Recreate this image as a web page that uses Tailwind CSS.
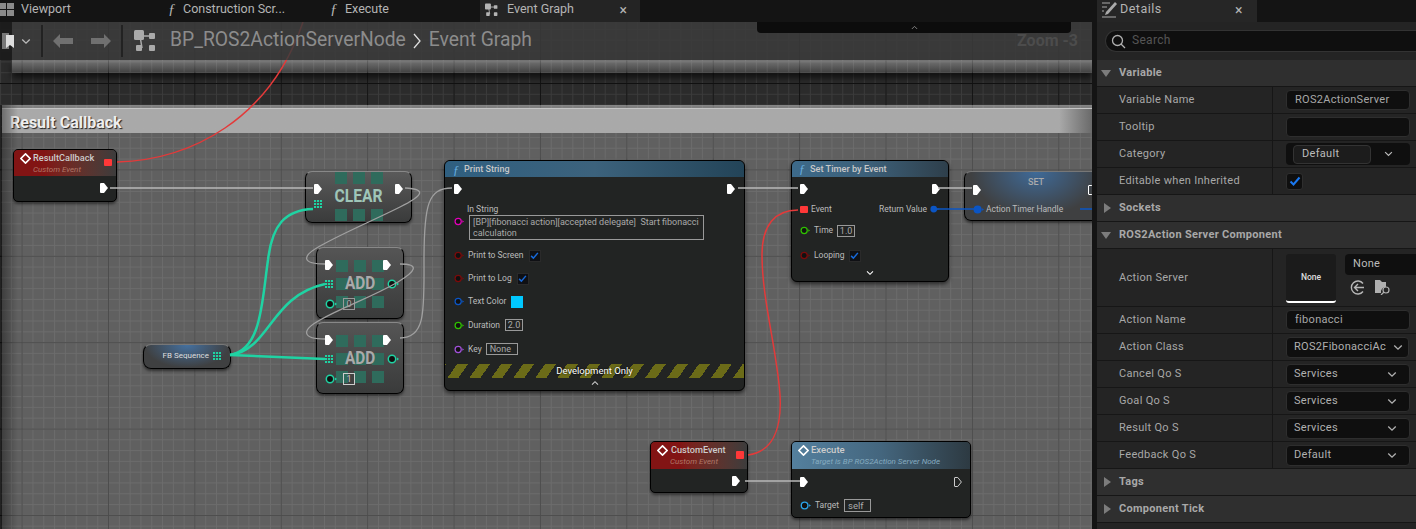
<!DOCTYPE html>
<html lang="en">
<head>
  <meta charset="UTF-8" />
  <title>Event Graph</title>
  <script src="https://cdn.jsdelivr.net/npm/@tailwindcss/browser@4"></script>
</head>
<body class="w-[1416px] h-[529px] overflow-hidden bg-[#141414] font-[Roboto,sans-serif] text-[#c0c0c0]">

  <!-- shared pin shapes -->
  <svg class="hidden">
    <symbol id="exec" viewBox="0 0 8 10"><path d="M1 0H4L8 5L4 10H1Q0 10 0 9V1Q0 0 1 0Z" fill="currentColor"/></symbol>
    <symbol id="execOff" viewBox="0 0 8 10"><path d="M1 .5H3.8L7.4 5L3.8 9.5H1Q.5 9.5 .5 9V1Q.5 .5 1 .5Z" fill="none" stroke="currentColor"/></symbol>
    <symbol id="ring" viewBox="0 0 12 10"><circle cx="5" cy="5" r="3.7" fill="#111" stroke="currentColor" stroke-width="1.5"/><path d="M10 3.5L12 5L10 6.5Z" fill="currentColor"/></symbol>
    <symbol id="dot" viewBox="0 0 12 10"><circle cx="5" cy="5" r="4.5" fill="currentColor"/><path d="M10 3.5L12 5L10 6.5Z" fill="currentColor"/></symbol>
    <symbol id="arr" viewBox="0 0 10 10"><path d="M0 0h2.6v2.6H0zM3.7 0h2.6v2.6H3.700zM7.400 0H10v2.600H7.400zM0 3.700h2.600v2.600H0zM3.700 3.700h2.600v2.600H3.700zM7.400 3.700H10v2.600H7.400zM0 7.400h2.600V10H0zM3.700 7.400h2.600V10H3.700zM7.400 7.400H10V10H7.400z" fill="currentColor"/></symbol>
    <symbol id="ev" viewBox="0 0 12 12"><path d="M6 1L11 6L6 11L1 6Z" fill="none" stroke="currentColor" stroke-width="1.800"/></symbol>
    <symbol id="chev" viewBox="0 0 12 8"><path d="M1.500 1.500L6 6L10.500 1.500" fill="none" stroke="currentColor" stroke-width="1.600"/></symbol>
    <symbol id="chk" viewBox="0 0 12 12"><path d="M1.500 6.500L4.500 9.500L10.500 2.500" fill="none" stroke="currentColor" stroke-width="2"/></symbol>
    <symbol id="graph" viewBox="0 0 22 22"><path d="M6 6L17 6M6 6L8 18" stroke="currentColor" stroke-width="1.500"/><rect x="0" y="0" width="10" height="10" rx="1.500" fill="currentColor"/><rect x="15" y="3" width="6" height="6" rx="1" fill="currentColor"/><rect x="2" y="15" width="6" height="6" rx="1" fill="currentColor"/><rect x="15" y="15" width="6" height="6" rx="1" fill="currentColor"/></symbol>
  </svg>

  <div class="flex h-full">
    <main class="w-[1092px] flex flex-col">
      <!-- document tabs -->
      <div class="h-[22px] flex bg-[#141414] text-[12.500px] text-[#b4b4b4]">
        <div class="w-[160px] flex items-center gap-[7px] pb-[3px]">
          <svg width="14" height="14" viewBox="0 0 14 14" fill="#8a8a8a"><rect width="6" height="6"/><rect x="7" width="7" height="6"/><rect y="7" width="6" height="6"/><rect x="7" y="7" width="7" height="6"/></svg>
          <span>Viewport</span>
        </div>
        <div class="w-[160px] flex items-center pl-[8px] gap-[8px] pb-[3px]"><span class="font-['Liberation_Serif'] italic text-[15px] w-[7px]">ƒ</span><span>Construction Scr...</span></div>
        <div class="w-[160px] flex items-center pl-[10px] gap-[8px] pb-[3px]"><span class="font-['Liberation_Serif'] italic text-[15px] w-[7px]">ƒ</span><span>Execute</span></div>
        <div class="w-[160px] flex items-center pl-[5px] gap-[9px] pb-[3px] bg-[#242424]">
          <svg width="13" height="14" class="text-[#b4b4b4]"><use href="#graph"/></svg>
          <span>Event Graph</span>
          <span class="ml-auto mr-[13px] text-[14px] leading-none">×</span>
        </div>
      </div>

      <!-- graph canvas -->
      <div class="relative flex-1 overflow-hidden bg-[#2b2b2b] bg-[linear-gradient(to_right,#111_1px,transparent_1px),linear-gradient(to_bottom,#111_1px,transparent_1px),linear-gradient(to_right,#3b3b3b_1px,transparent_1px),linear-gradient(to_bottom,#3b3b3b_1px,transparent_1px)] bg-[size:86.400px_86.400px,86.400px_86.400px,10.800px_10.800px,10.800px_10.800px] bg-[position:21.600px_61px,21.600px_61px,0.100px_7px,0.100px_7px]">

        <!-- band of the comment above -->
        <div class="absolute left-[12px] right-0 top-[38px] h-[13px] bg-gradient-to-b from-white/35 to-white/10 shadow-[0_5px_6px_rgba(0,0,0,.6)]"></div>

        <!-- Result Callback comment -->
        <div class="absolute left-[2px] right-0 top-[83px] bottom-0 bg-white/25 border-t-[3px] border-white/20">
          <div class="h-[25px] mt-0 pl-[8px] pt-[3px] flex items-center bg-gradient-to-r from-[#a9a9a9] from-[97%] to-[#6a6a6a] border-t border-[#c4c4c4] text-[16px] font-bold text-[#eee] [text-shadow:1px_1px_1px_#222]">Result Callback</div>
        </div>
        <div class="absolute left-0 top-[83px] bottom-0 w-[18px] bg-gradient-to-r from-black/40 to-transparent"></div>

        <!-- ResultCallback -->
        <div class="absolute left-[13px] top-[127px] w-[104px] h-[53px] rounded-[5px] bg-[#222423] border border-black shadow-[0_2px_3px_rgba(0,0,0,.5)] overflow-hidden">
          <div class="h-[26px] bg-gradient-to-r from-[#821414] from-30% to-[#3c3c3c] pl-[6px] pr-[4px] pt-[1px] relative">
            <div class="flex items-center gap-[2px] text-[9.200px] font-medium text-[#ccc] leading-[14px]"><svg width="11" height="11" class="text-white"><use href="#ev"/></svg>ResultCallback</div>
            <div class="pl-[13px] text-[8px] italic leading-[10px] text-[#b07868]">Custom Event</div>
            <span class="absolute right-[4px] top-[9px] w-[8px] h-[7px] rounded-[1px] bg-[#ff3838]"></span>
          </div>
          <div class="flex justify-end pr-[8px] pt-[7px]"><svg width="8" height="10" class="text-white"><use href="#exec"/></svg></div>
        </div>

        <!-- CLEAR -->
        <div class="absolute left-[305px] top-[149px] w-[107px] h-[52px] rounded-[7px] bg-gradient-to-b from-[#5a5a5a] to-[#3a3b3b] border border-black border-t-[#888] shadow-[0_2px_3px_rgba(0,0,0,.5)] overflow-hidden">
          <div class="absolute inset-0 flex flex-col justify-between items-center">
            <div class="flex gap-[6px]"><i class="block w-[12px] h-[12px] bg-[#2f6b5c]"></i><i class="block w-[12px] h-[12px] bg-[#2f6b5c]"></i><i class="block w-[12px] h-[12px] bg-[#2f6b5c]"></i></div>
            <div class="flex gap-[6px] mb-[1px]"><i class="block w-[12px] h-[12px] bg-[#2f6b5c]"></i><i class="block w-[12px] h-[12px] bg-[#2f6b5c]"></i><i class="block w-[12px] h-[12px] bg-[#2f6b5c]"></i></div>
          </div>
          <div class="absolute inset-x-0 top-[12px] text-center text-[18px] leading-[24px] font-bold text-[#9fc5b8] scale-x-[0.87]">CLEAR</div>
          <div class="relative flex justify-between px-[8px] pt-[12px]"><svg width="8" height="10" class="text-white"><use href="#exec"/></svg><svg width="8" height="10" class="text-white"><use href="#exec"/></svg></div>
          <svg width="8" height="8" class="relative ml-[8px] mt-[6px] text-[#1fd3a3]"><use href="#arr"/></svg>
        </div>

        <!-- ADD 0 -->
        <div class="absolute left-[316px] top-[225px] w-[88px] h-[72px] rounded-[7px] bg-gradient-to-b from-[#555] to-[#3a3b3b] border border-black border-t-[#888] shadow-[0_2px_3px_rgba(0,0,0,.5)] overflow-hidden">
          <div class="absolute left-[19px] top-[12px] grid grid-cols-3 gap-[6px]">
            <i class="block w-[12px] h-[12px] bg-[#2f6b5c]"></i><i class="block w-[12px] h-[12px] bg-[#2f6b5c]"></i><i class="block w-[12px] h-[12px] bg-[#2f6b5c]"></i>
            <i class="block w-[12px] h-[12px] bg-[#2f6b5c]"></i><i class="block w-[12px] h-[12px] bg-[#2f6b5c]"></i><i class="block w-[12px] h-[12px] bg-[#2f6b5c]"></i>
            <i class="block w-[12px] h-[12px] bg-[#2f6b5c]"></i><i class="block w-[12px] h-[12px] bg-[#2f6b5c]"></i><i class="block w-[12px] h-[12px] bg-[#2f6b5c]"></i>
          </div>
          <div class="absolute inset-x-0 top-[23px] text-center text-[18px] leading-[24px] font-bold text-[#aaa] scale-x-[0.85]">ADD</div>
          <div class="relative flex justify-between pl-[8px] pr-[12px] pt-[12px]"><svg width="8" height="10" class="text-white"><use href="#exec"/></svg><svg width="8" height="10" class="text-white"><use href="#exec"/></svg></div>
          <div class="relative flex justify-between items-center pl-[8px] pr-[4px] mt-[9px]"><svg width="8" height="8" class="text-[#1fd3a3]"><use href="#arr"/></svg><svg width="12" height="10" class="text-[#1fd3a3]"><use href="#ring"/></svg></div>
          <div class="relative flex items-center gap-[6px] pl-[8px] mt-[9px]"><svg width="12" height="10" class="text-[#1fd3a3]"><use href="#ring"/></svg><span class="block w-[12px] h-[12px] border border-[#999] text-[9px] leading-[10px] text-center text-[#aaa]">0</span></div>
        </div>

        <!-- ADD 1 -->
        <div class="absolute left-[316px] top-[300px] w-[88px] h-[72px] rounded-[7px] bg-gradient-to-b from-[#555] to-[#3a3b3b] border border-black border-t-[#888] shadow-[0_2px_3px_rgba(0,0,0,.5)] overflow-hidden">
          <div class="absolute left-[19px] top-[12px] grid grid-cols-3 gap-[6px]">
            <i class="block w-[12px] h-[12px] bg-[#2f6b5c]"></i><i class="block w-[12px] h-[12px] bg-[#2f6b5c]"></i><i class="block w-[12px] h-[12px] bg-[#2f6b5c]"></i>
            <i class="block w-[12px] h-[12px] bg-[#2f6b5c]"></i><i class="block w-[12px] h-[12px] bg-[#2f6b5c]"></i><i class="block w-[12px] h-[12px] bg-[#2f6b5c]"></i>
            <i class="block w-[12px] h-[12px] bg-[#2f6b5c]"></i><i class="block w-[12px] h-[12px] bg-[#2f6b5c]"></i><i class="block w-[12px] h-[12px] bg-[#2f6b5c]"></i>
          </div>
          <div class="absolute inset-x-0 top-[23px] text-center text-[18px] leading-[24px] font-bold text-[#aaa] scale-x-[0.85]">ADD</div>
          <div class="relative flex justify-between pl-[8px] pr-[12px] pt-[12px]"><svg width="8" height="10" class="text-white"><use href="#exec"/></svg><svg width="8" height="10" class="text-white"><use href="#exec"/></svg></div>
          <div class="relative flex justify-between items-center pl-[8px] pr-[4px] mt-[9px]"><svg width="8" height="8" class="text-[#1fd3a3]"><use href="#arr"/></svg><svg width="12" height="10" class="text-[#1fd3a3]"><use href="#ring"/></svg></div>
          <div class="relative flex items-center gap-[6px] pl-[8px] mt-[9px]"><svg width="12" height="10" class="text-[#1fd3a3]"><use href="#ring"/></svg><span class="block w-[12px] h-[12px] border border-[#ccc] text-[9px] leading-[10px] text-center text-[#ccc]">1</span></div>
        </div>

        <!-- FB Sequence -->
        <div class="absolute left-[143px] top-[322px] w-[88px] h-[25px] rounded-[8px] bg-[radial-gradient(ellipse_at_50%_0%,#44709f,#3f4041_70%)] border border-black border-t-[#777] shadow-[0_2px_3px_rgba(0,0,0,.5)] flex items-center justify-end gap-[4px] pr-[9px] pb-[1px] text-[8px] text-[#ddd]">
          FB Sequence <svg width="8" height="8" class="text-[#1fd3a3]"><use href="#arr"/></svg>
        </div>

        <!-- Print String -->
        <div class="absolute left-[444px] top-[138px] w-[301px] h-[231px] rounded-[6px] bg-[#222423] border border-black shadow-[0_2px_4px_rgba(0,0,0,.6)] overflow-hidden text-[8.500px] text-[#bbb]">
          <div class="h-[16px] pl-[8px] pt-[1px] flex items-center gap-[5px] bg-gradient-to-r from-[#2f5f80] via-[#3c627c] to-[#234458] text-[9px] font-medium text-[#c8c8c8]"><span class="font-['Liberation_Serif'] italic text-[12px] text-[#6ab0e0]">ƒ</span>Print String</div>
          <div class="h-[24px] flex justify-between items-center px-[9px]"><svg width="8" height="10" class="text-white"><use href="#exec"/></svg><svg width="8" height="10" class="text-white"><use href="#exec"/></svg></div>
          <div class="mt-[3px] h-[11px] leading-[11px] pl-[22px]">In String</div>
          <div class="h-[25px] flex pl-[9px] gap-[5px]">
            <svg width="10" height="9" class="mt-[2px] text-[#e000b8]"><use href="#ring"/></svg>
            <div class="w-[235px] h-[25px] border border-[#999] px-[3px] text-[9px] leading-[11px] pt-[1px] text-[#aaa] whitespace-pre-wrap">[BP][fibonacci action][accepted delegate]  Start fibonacci calculation</div>
          </div>
          <div class="mt-[4px] h-[23px] flex items-center pl-[9px] gap-[4px]"><svg width="10" height="9" class="text-[#7a0a0a]"><use href="#ring"/></svg>Print to Screen<span class="ml-[1px] w-[12px] h-[12px] bg-[#0f1014] border border-[#2a2a2a] grid place-items-center text-[#1668d8]"><svg width="9" height="9"><use href="#chk"/></svg></span></div>
          <div class="h-[23px] flex items-center pl-[9px] gap-[4px]"><svg width="10" height="9" class="text-[#7a0a0a]"><use href="#ring"/></svg>Print to Log<span class="ml-[1px] w-[12px] h-[12px] bg-[#0f1014] border border-[#2a2a2a] grid place-items-center text-[#1668d8]"><svg width="9" height="9"><use href="#chk"/></svg></span></div>
          <div class="h-[23px] flex items-center pl-[9px] gap-[4px]"><svg width="10" height="9" class="text-[#0b55c4]"><use href="#ring"/></svg>Text Color<span class="ml-[1px] w-[12px] h-[12px] bg-[#00c8ff]"></span></div>
          <div class="h-[24px] flex items-center pl-[9px] gap-[4px]"><svg width="10" height="9" class="text-[#2fc000]"><use href="#ring"/></svg>Duration<span class="ml-[1px] w-[18px] h-[12px] border border-[#999] text-center leading-[10px] text-[9px] text-[#aaa]">2.0</span></div>
          <div class="h-[24px] flex items-center pl-[9px] gap-[4px]"><svg width="10" height="9" class="text-[#a050d8]"><use href="#ring"/></svg>Key<span class="w-[32px] h-[12px] border border-[#999] pl-[3px] leading-[10px] text-[9px] text-[#aaa]">None</span></div>
          <div class="mt-[3px] h-[14px] flex items-center justify-center bg-[repeating-linear-gradient(-55deg,#6b6b18_0_9px,#222423_9px_18px)] text-[9.500px] text-white [text-shadow:0_0_2px_#000]">Development Only</div>
          <div class="flex justify-center pt-[2px] text-[#ccc]"><svg width="8" height="6" class="rotate-180"><use href="#chev"/></svg></div>
        </div>

        <!-- Set Timer by Event -->
        <div class="absolute left-[791px] top-[138px] w-[158px] h-[122px] rounded-[6px] bg-[#222423] border border-black shadow-[0_2px_4px_rgba(0,0,0,.6)] overflow-hidden text-[8.500px] text-[#bbb]">
          <div class="h-[16px] pl-[7px] flex items-center gap-[5px] bg-gradient-to-r from-[#3d6a8a] via-[#3c5f78] to-[#2e3f4b] text-[9.200px] font-medium text-[#c8c8c8]"><span class="font-['Liberation_Serif'] italic text-[12px] text-[#6ab0e0]">ƒ</span>Set Timer by Event</div>
          <div class="h-[24px] flex justify-between items-center px-[8px]"><svg width="8" height="10" class="text-white"><use href="#exec"/></svg><svg width="8" height="10" class="text-white"><use href="#exec"/></svg></div>
          <div class="h-[16px] flex items-center pl-[8px] pr-[9px]"><span class="w-[8px] h-[7px] bg-[#ff3838] rounded-[1px] mr-[3px]"></span>Event<span class="ml-auto mr-[3px]">Return Value</span><svg width="9" height="8" class="text-[#0b55c4]"><use href="#dot"/></svg></div>
          <div class="h-[27px] flex items-center pl-[8px] gap-[4px]"><svg width="10" height="9" class="text-[#2fc000]"><use href="#ring"/></svg>Time<span class="w-[18px] h-[12px] border border-[#999] text-center leading-[10px] text-[9px] text-[#aaa]">1.0</span></div>
          <div class="h-[23px] flex items-center pl-[8px] gap-[4px]"><svg width="10" height="9" class="text-[#7a0a0a]"><use href="#ring"/></svg>Looping<span class="w-[12px] h-[12px] bg-[#0f1014] border border-[#2a2a2a] grid place-items-center text-[#1668d8]"><svg width="9" height="9"><use href="#chk"/></svg></span></div>
          <div class="flex justify-center pt-[3px] text-white"><svg width="8" height="6"><use href="#chev"/></svg></div>
        </div>

        <!-- SET -->
        <div class="absolute left-[964px] top-[149px] w-[144px] h-[50px] rounded-[7px] bg-[radial-gradient(ellipse_at_50%_0%,#3f6a98,#3f4041_65%)] border border-black border-t-[#777] shadow-[0_2px_3px_rgba(0,0,0,.5)] text-[8.500px] text-[#bbb]">
          <div class="text-center text-[9px] leading-[12px] mt-[4px] text-[#aaa] font-medium">SET</div>
          <div class="flex justify-between items-center pl-[8px] pr-[11px] -mt-[3px]"><svg width="8" height="10" class="text-white"><use href="#exec"/></svg><svg width="8" height="10" class="text-white"><use href="#execOff"/></svg></div>
          <div class="flex items-center pl-[8px] mt-[8px] gap-[2px]"><svg width="11" height="9" class="text-[#0b55c4]"><use href="#dot"/></svg>Action Timer Handle</div>
        </div>

        <!-- CustomEvent -->
        <div class="absolute left-[650px] top-[419px] w-[98px] h-[52px] rounded-[5px] bg-[#222423] border border-black shadow-[0_2px_3px_rgba(0,0,0,.5)] overflow-hidden">
          <div class="h-[27px] bg-gradient-to-r from-[#821414] from-30% to-[#3c3c3c] pl-[6px] pt-[1px] relative">
            <div class="flex items-center gap-[3px] text-[9.200px] font-medium text-[#ccc] leading-[14px]"><svg width="11" height="11" class="text-white"><use href="#ev"/></svg>CustomEvent</div>
            <div class="pl-[13px] text-[8px] italic leading-[10px] text-[#b07868]">Custom Event</div>
            <span class="absolute right-[3px] top-[9px] w-[8px] h-[8px] rounded-[1px] bg-[#ff3838]"></span>
          </div>
          <div class="flex justify-end pr-[7px] pt-[7px]"><svg width="8" height="10" class="text-white"><use href="#exec"/></svg></div>
        </div>

        <!-- Execute -->
        <div class="absolute left-[791px] top-[419px] w-[180px] h-[77px] rounded-[5px] bg-[#222423] border border-black shadow-[0_2px_3px_rgba(0,0,0,.5)] overflow-hidden text-[8.500px] text-[#bbb]">
          <div class="h-[27px] bg-gradient-to-r from-[#54809e] via-[#44667e] to-[#2d3a42] pl-[6px] pt-[1px]">
            <div class="flex items-center gap-[2px] text-[9.500px] font-medium text-[#ccc] leading-[14px]"><svg width="11" height="11" class="text-white"><use href="#ev"/></svg>Execute</div>
            <div class="pl-[13px] text-[8px] italic leading-[10px] text-[#86acc0]">Target is BP ROS2Action Server Node</div>
          </div>
          <div class="flex justify-between px-[8px] pt-[8px]"><svg width="8" height="10" class="text-white"><use href="#exec"/></svg><svg width="8" height="10" class="text-[#ccc]"><use href="#execOff"/></svg></div>
          <div class="flex items-center pl-[8px] mt-[12px] gap-[4px]"><svg width="11" height="9" class="text-[#2aa4e8]"><use href="#ring"/></svg>Target<span class="ml-[1px] w-[27px] h-[13px] border border-[#999] pl-[3px] text-[9.500px] leading-[11px] text-[#aaa]">self</span></div>
        </div>

        <!-- wires, drawn over the nodes -->
        <svg class="absolute left-0 top-[-22px]" width="1092" height="529" fill="none">
          <path d="M117 162C190 160 270 120 303 22" stroke="#e33a3a" stroke-width="1.500"/>
          <path d="M748 455C772 452 782 430 780 395C777 350 762 300 762 255C762 225 775 210 798 210" stroke="#e33a3a" stroke-width="1.500"/>
          <g stroke="#b8b8b8" stroke-width="1.500">
            <path d="M110 188H313"/>
            <path d="M738 188H798M938 188H972M745 481H800"/>
          </g>
          <g stroke="#a0a0a0" stroke-width="1.300">
            <path d="M405 188C428 189 422 196 400 207C370 222 345 232 320 246C300 257 303 264 325 264"/>
            <path d="M400 264C420 264 416 271 398 282C370 298 345 306 320 320C300 331 303 339 325 339"/>
            <path d="M400 338C426 338 424 310 424 260C424 205 428 188 452 188"/>
          </g>
          <g stroke="#1fd3a3" stroke-width="2.500">
            <path d="M230 355C262 350 262 300 268 260C272 225 285 210 313 209"/>
            <path d="M230 355C270 350 270 296 325 284"/>
            <path d="M230 355L325 359"/>
          </g>
          <path d="M935 209H975M1080 209H1092" stroke="#0b55c4" stroke-width="1.500"/>
        </svg>

        <!-- toolbar over the graph -->
        <div class="absolute left-0 right-0 top-0 h-[38px] flex items-center bg-[#3c3c3c]/85 text-[19.300px] text-[#8c8c8c]">
          <div class="h-full w-[12px] bg-black/50 flex items-center">
            <svg width="13" height="16" viewBox="0 0 13 16" class="ml-[2px] overflow-visible"><path d="M0 0H7V16H0Z" fill="#777"/><path d="M4 2H12V15L8 12L4 15Z" fill="#ddd"/></svg>
          </div>
          <svg width="10" height="7" class="ml-[9px] text-[#bbb]"><use href="#chev"/></svg>
          <div class="ml-[10px] w-[2px] h-[32px] bg-[#222]"></div>
          <svg width="20" height="14" viewBox="0 0 20 14" class="ml-[10px]" fill="#707070"><path d="M0 7L7 0V4H20V10H7V14Z"/></svg>
          <svg width="20" height="14" viewBox="0 0 20 14" class="ml-[18px]" fill="#707070"><path d="M20 7L13 0V4H0V10H13V14Z"/></svg>
          <div class="ml-[10px] w-[2px] h-[32px] bg-[#222]"></div>
          <svg width="22" height="22" class="ml-[11px] text-[#aaa]"><use href="#graph"/></svg>
          <span class="ml-[14px] pb-[2px]">BP_ROS2ActionServerNode</span>
          <svg width="8" height="16" viewBox="0 0 8 16" class="ml-[7px]" fill="none" stroke="#ddd" stroke-width="1.300"><path d="M1 1L7 8L1 15"/></svg>
          <span class="ml-[8px] pb-[2px]">Event Graph</span>
          <span class="ml-auto mr-[14px] text-[16px] font-bold text-[#4c4c4c]">Zoom -3</span>
        </div>
        <div class="absolute left-[757px] top-0 w-[314px] h-[11px] rounded-b-[4px] bg-[#0c0c0c] flex justify-center text-[#888]">
          <svg width="7" height="5" class="mt-[3px] rotate-180"><use href="#chev"/></svg>
        </div>
      </div>
    </main>

    <!-- Details panel -->
    <aside class="ml-[5px] w-[319px] flex flex-col bg-[#242424] text-[11px] tracking-[0.3px] text-[#a8a8a8]">
      <div class="h-[22px] flex bg-[#141414]">
        <div class="w-[160px] flex items-center bg-[#262626] pl-[5px] pb-[3px] gap-[3px] text-[12.500px] tracking-[0.5px] text-[#b4b4b4]">
          <svg width="15" height="16" viewBox="0 0 15 16" fill="none" stroke="#aaa" stroke-width="1.200"><path d="M13 0L4 10L3 13L6 12L15 2Z" fill="#aaa" stroke="none"/><path d="M0 1H8M0 5H5M0 9H2M0 15H14"/></svg>
          <span>Details</span>
          <span class="ml-auto mr-[14px] text-[14px] leading-none">×</span>
        </div>
      </div>
      <div class="h-[38px] flex items-center pl-[8px]">
        <div class="w-full h-[22px] rounded-l-full bg-[#0f0f0f] border border-[#333] border-r-0 flex items-center pl-[5px] pb-[3px] gap-[6px] text-[12px] text-[#555]">
          <svg width="15" height="15" viewBox="0 0 15 15" class="mt-[3px]" fill="none" stroke="#b0b0b0" stroke-width="1.300"><circle cx="6.500" cy="6.500" r="5"/><path d="M10 10L14 14"/></svg>
          Search
        </div>
      </div>

      <div class="h-[27px] flex items-center bg-[#2f2f2f] border-b border-[#161616] font-bold">
        <svg width="10" height="7" viewBox="0 0 10 7" class="ml-[4px] mr-[8px]" fill="#7c7c7c"><path d="M0 0H10L5 7Z"/></svg>Variable
      </div>
      <div class="h-[27px] flex border-b border-[#161616]">
        <div class="w-[176px] shrink-0 pl-[22px] flex items-center border-r border-[#161616]">Variable Name</div>
        <div class="pl-[13px] flex items-center"><div class="w-[124px] h-[20px] rounded-[4px] bg-[#0f0f0f] border border-[#2e2e2e] pl-[8px] leading-[17px]">ROS2ActionServer</div></div>
      </div>
      <div class="h-[27px] flex border-b border-[#161616]">
        <div class="w-[176px] shrink-0 pl-[22px] flex items-center border-r border-[#161616]">Tooltip</div>
        <div class="pl-[13px] flex items-center"><div class="w-[124px] h-[20px] rounded-[4px] bg-[#0f0f0f] border border-[#2e2e2e]"></div></div>
      </div>
      <div class="h-[27px] flex border-b border-[#161616]">
        <div class="w-[176px] shrink-0 pl-[22px] flex items-center border-r border-[#161616]">Category</div>
        <div class="pl-[13px] flex items-center"><div class="w-[124px] h-[22px] rounded-[4px] bg-[#0f0f0f] pl-[7px] pr-[17px] flex items-center justify-between"><div class="w-[78px] h-[19px] rounded-[4px] bg-[#1c1c1c] border border-[#333] pl-[8px] leading-[15px] text-[#bbb]">Default</div><svg width="9" height="6" class="text-[#bbb]"><use href="#chev"/></svg></div></div>
      </div>
      <div class="h-[27px] flex border-b border-[#161616]">
        <div class="w-[176px] shrink-0 pl-[22px] flex items-center border-r border-[#161616]">Editable when Inherited</div>
        <div class="pl-[13px] flex items-center"><span class="w-[17px] h-[17px] rounded-[3px] bg-[#0f0f0f] border border-[#2e2e2e] grid place-items-center text-[#1a78f0]"><svg width="12" height="12"><use href="#chk"/></svg></span></div>
      </div>
      <div class="h-[27px] flex items-center bg-[#2f2f2f] border-b border-[#161616] font-bold">
        <svg width="7" height="10" viewBox="0 0 7 10" class="ml-[7px] mr-[8px]" fill="#7c7c7c"><path d="M0 0V10L7 5Z"/></svg>Sockets
      </div>
      <div class="h-[27px] flex items-center bg-[#2f2f2f] border-b border-[#161616] font-bold">
        <svg width="10" height="7" viewBox="0 0 10 7" class="ml-[4px] mr-[8px]" fill="#7c7c7c"><path d="M0 0H10L5 7Z"/></svg>ROS2Action Server Component
      </div>

      <div class="h-[58px] flex border-b border-[#161616]">
        <div class="w-[176px] shrink-0 pl-[22px] pt-[2px] flex items-center border-r border-[#161616]">Action Server</div>
        <div class="pl-[13px] pt-[5px] flex gap-[9px]">
          <div class="w-[50px] h-[49px] rounded-[3px] bg-[#1b1b1b] border-b-[2px] border-white flex items-center justify-center text-[8.500px] tracking-normal font-medium text-[#ddd]">None</div>
          <div>
            <div class="w-[71px] h-[21px] rounded-l-[4px] bg-[#0f0f0f] pl-[8px] leading-[20px] text-[#bbb]">None</div>
            <div class="flex items-center gap-[10px] pl-[5px] mt-[5px]">
              <svg width="15" height="15" viewBox="0 0 15 15" fill="none" stroke="#b8b8b8" stroke-width="1.400"><path d="M13 3.500A6.500 6.500 0 1 0 13 11.500"/><path d="M14 7.500H5M8 4L4.500 7.500L8 11"/></svg>
              <svg width="16" height="15" viewBox="0 0 16 15"><path d="M0 0H5L7 2H11V7A5 5 0 0 0 6 13H0Z" fill="#b0b0b0"/><circle cx="11" cy="10" r="3" fill="none" stroke="#b0b0b0" stroke-width="1.200"/><path d="M9 12L6 15" stroke="#b0b0b0" stroke-width="1.200"/></svg>
            </div>
          </div>
        </div>
      </div>

      <div class="h-[27px] flex border-b border-[#161616]">
        <div class="w-[176px] shrink-0 pl-[22px] flex items-center border-r border-[#161616]">Action Name</div>
        <div class="pl-[13px] flex items-center"><div class="w-[124px] h-[20px] rounded-[4px] bg-[#0f0f0f] border border-[#2e2e2e] pl-[8px] leading-[17px]">fibonacci</div></div>
      </div>
      <div class="h-[27px] flex border-b border-[#161616]">
        <div class="w-[176px] shrink-0 pl-[22px] flex items-center border-r border-[#161616]">Action Class</div>
        <div class="pl-[13px] flex items-center"><div class="w-[123px] h-[21px] rounded-[4px] bg-[#0f0f0f] border border-[#2e2e2e] pl-[7px] pr-[5px] flex items-center justify-between text-[#b0b0b0]">ROS2FibonacciAc<svg width="10" height="7"><use href="#chev"/></svg></div></div>
      </div>
      <div class="h-[27px] flex border-b border-[#161616]">
        <div class="w-[176px] shrink-0 pl-[22px] flex items-center border-r border-[#161616]">Cancel Qo S</div>
        <div class="pl-[13px] flex items-center"><div class="w-[124px] h-[21px] rounded-[4px] bg-[#0f0f0f] border border-[#2e2e2e] pl-[7px] pr-[12px] flex items-center justify-between text-[#b0b0b0]">Services<svg width="10" height="7"><use href="#chev"/></svg></div></div>
      </div>
      <div class="h-[27px] flex border-b border-[#161616]">
        <div class="w-[176px] shrink-0 pl-[22px] flex items-center border-r border-[#161616]">Goal Qo S</div>
        <div class="pl-[13px] flex items-center"><div class="w-[124px] h-[21px] rounded-[4px] bg-[#0f0f0f] border border-[#2e2e2e] pl-[7px] pr-[12px] flex items-center justify-between text-[#b0b0b0]">Services<svg width="10" height="7"><use href="#chev"/></svg></div></div>
      </div>
      <div class="h-[27px] flex border-b border-[#161616]">
        <div class="w-[176px] shrink-0 pl-[22px] flex items-center border-r border-[#161616]">Result Qo S</div>
        <div class="pl-[13px] flex items-center"><div class="w-[124px] h-[21px] rounded-[4px] bg-[#0f0f0f] border border-[#2e2e2e] pl-[7px] pr-[12px] flex items-center justify-between text-[#b0b0b0]">Services<svg width="10" height="7"><use href="#chev"/></svg></div></div>
      </div>
      <div class="h-[27px] flex border-b border-[#161616]">
        <div class="w-[176px] shrink-0 pl-[22px] flex items-center border-r border-[#161616]">Feedback Qo S</div>
        <div class="pl-[13px] flex items-center"><div class="w-[124px] h-[21px] rounded-[4px] bg-[#0f0f0f] border border-[#2e2e2e] pl-[7px] pr-[12px] flex items-center justify-between text-[#b0b0b0]">Default<svg width="10" height="7"><use href="#chev"/></svg></div></div>
      </div>
      <div class="h-[27px] flex items-center bg-[#2f2f2f] border-b border-[#161616] font-bold">
        <svg width="7" height="10" viewBox="0 0 7 10" class="ml-[7px] mr-[8px]" fill="#7c7c7c"><path d="M0 0V10L7 5Z"/></svg>Tags
      </div>
      <div class="h-[27px] flex items-center bg-[#2f2f2f] border-b border-[#161616] font-bold">
        <svg width="7" height="10" viewBox="0 0 7 10" class="ml-[7px] mr-[8px]" fill="#7c7c7c"><path d="M0 0V10L7 5Z"/></svg>Component Tick
      </div>
    </aside>
  </div>
</body>
</html>
